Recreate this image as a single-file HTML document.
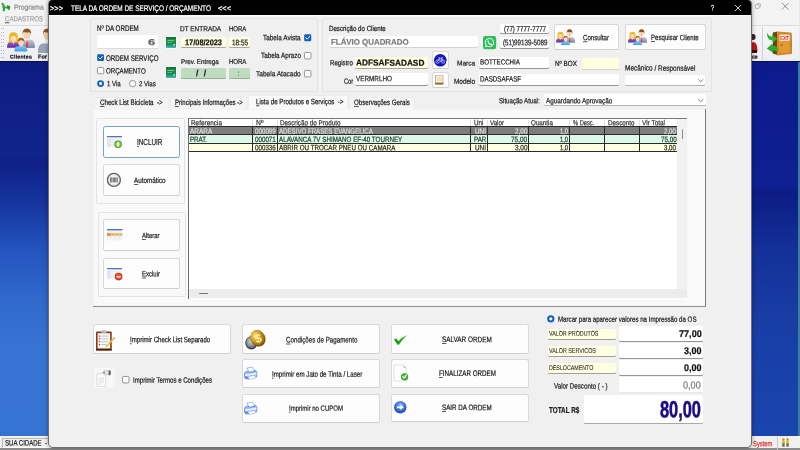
<!DOCTYPE html>
<html lang="pt-BR"><head><meta charset="utf-8"><title>Tela da Ordem de Serviço / Orçamento</title>
<style>
html,body{margin:0;padding:0}
body{width:800px;height:450px;overflow:hidden;position:relative;background:#f0f0f0;font-family:"Liberation Sans",sans-serif;color:#1a1a1a}
#root{position:absolute;left:0;top:0;width:800px;height:450px;overflow:hidden;transform:translateZ(0);will-change:transform}
.b{position:absolute;box-sizing:content-box}
.t{position:absolute;white-space:pre;line-height:1;transform-origin:0 0;display:block;-webkit-text-stroke:.22px}
.t u{text-decoration-thickness:.5px;text-underline-offset:.6px;text-decoration-color:rgba(20,20,20,.7)}
svg{position:absolute;overflow:visible}
</style></head>
<body>
<div id="root">
<div class="b" style="left:0;top:0;width:800px;height:450px;background:#f0f0f0"></div>
<div class="b" style="left:0.00px;top:0.00px;width:800.00px;height:25.00px;background:#f3f3f3;"></div>
<div class="b" style="left:0.00px;top:24.50px;width:800.00px;height:1.00px;background:#dcdcdc;"></div>
<div class="b" style="left:0.00px;top:25.50px;width:800.00px;height:36.00px;background:linear-gradient(to bottom,#f5f5f7,#eceef2);"></div>
<div class="b" style="left:0;top:61.5px;width:52px;height:375px;background:linear-gradient(to bottom,#0e1c80 0%,#10248e 25%,#0e2088 27%,#183aa4 40%,#2454be 50%,#3068cc 63%,#3874d4 77%,#3674d4 100%)"></div>
<div class="b" style="left:748px;top:61.5px;width:52px;height:375px;background:linear-gradient(to bottom,#0c1a8c 0%,#0e2092 33%,#0c1c86 35%,#143098 50%,#183ea6 70%,#1a44ae 100%)"></div>
<div class="b" style="left:798.30px;top:61.00px;width:1.70px;height:375.00px;background:#3c7c9c;"></div>
<div class="b" style="left:0.00px;top:61.00px;width:800.00px;height:1.00px;background:#081050;"></div>
<div class="b" style="left:0.00px;top:436.00px;width:800.00px;height:14.00px;background:#f0f0f0;"></div>
<div class="b" style="left:2.00px;top:437.60px;width:45.00px;height:8.80px;border:1px solid #b8b8b8;border-right-color:#fff;border-bottom-color:#fff;"></div>
<div class="b" style="left:0.00px;top:448.40px;width:800.00px;height:1.60px;background:#8c8c8c;"></div>
<span class="t" style="left:4.60px;top:439px;font-size:7.8px;transform:translateY(0.60px) rotate(.05deg) scaleX(0.7752);color:#222;">SUA CIDADE  -</span>
<span class="t" style="left:752.50px;top:440px;font-size:7.7px;transform:translateY(0.20px) rotate(.05deg) scaleX(0.7596);color:#e03030;">System</span>
<div class="b" style="left:777.00px;top:437.00px;width:1.00px;height:13.00px;background:#c8c8c8;"></div>
<svg style="left:781.00px;top:438.00px" width="9" height="9.6" viewBox="0 0 9 9.6"><rect x="0" y="0" width="9" height="9.6" fill="#fafafa"/><path d="M.8 9 V4 Q.8 2.4 2.4 2.4 Q4 2.4 4 4 V9 Z" fill="#e8b820"/><circle cx="2.4" cy="1.6" r="1.3" fill="#d09010"/>
<path d="M5 9 V4 Q5 2.4 6.6 2.4 Q8.2 2.4 8.2 4 V9 Z" fill="#e8c030"/><circle cx="6.6" cy="1.6" r="1.3" fill="#d09010"/><rect x="1.4" y="5.4" width="2" height="3" fill="#3a6ad0"/><rect x="5.6" y="5.4" width="2" height="3" fill="#3a6ad0"/></svg>
<div class="b" style="left:798.50px;top:0.00px;width:1.50px;height:61.00px;background:#e8e8e8;"></div>
<svg style="left:1.20px;top:1.60px" width="10" height="10" viewBox="0 0 10 10"><path d="M0.4 1.6 Q1.4 0.2 2.8 1.2 Q3.4 2.6 4.2 4.2 Q5 4.8 4.6 6 Q3.8 6.8 4 8.4 Q3.4 9.6 2 9.2 Q1.2 8 2 6.6 Q1 5 1.2 3.4 Q0.2 2.6 0.4 1.6 Z" fill="#2aa83a"/>
<path d="M6 3.4 Q7 2.6 7.6 3.8 Q8.6 3.4 9.2 4.4 Q9.6 5.8 8.8 6.4 Q9.4 7.6 8.4 8 Q7 8 6.8 6.8 Q5.4 6.6 4.6 6 L4.4 4.8 Q5.6 5 6.2 4.6 Q5.8 4 6 3.4 Z" fill="#259a34"/>
<path d="M1 1.8 Q1.8 1 2.4 1.8 L3.4 4.2 L2.4 4.6 Z" fill="#5cd060"/></svg>
<span class="t" style="left:14.00px;top:4px;font-size:7.1px;transform:translateY(0.50px) rotate(.05deg) scaleX(0.9559);color:#8a8a8a;">Programa</span>
<span class="t" style="left:5.00px;top:15px;font-size:7.3px;transform:translateY(0.20px) rotate(.05deg) scaleX(0.8364);color:#a0a4a8;"><u>C</u>ADASTROS</span>
<svg style="left:754.80px;top:3.20px" width="6.2" height="6.2" viewBox="0 0 7.5 7.5"><rect x="0.5" y="2" width="4.6" height="4.6" rx="1" fill="none" stroke="#8a8a8a" stroke-width=".7"/><path d="M2 2 V1.4 Q2 .5 3 .5 H5.6 Q6.6 .5 6.6 1.5 V4 Q6.6 5 5.8 5" fill="none" stroke="#8a8a8a" stroke-width=".7"/></svg>
<svg style="left:781.50px;top:2.50px" width="6.5" height="6.5" viewBox="0 0 6.5 6.5"><path d="M0 0 L6.5 6.5 M6.5 0 L0 6.5" stroke="#777" stroke-width="0.8" fill="none"/></svg>
<div class="b" style="left:1.00px;top:28.00px;width:1.00px;height:1.00px;background:#b8b8b8;"></div>
<div class="b" style="left:3.40px;top:28.00px;width:1.00px;height:1.00px;background:#b8b8b8;"></div>
<div class="b" style="left:1.00px;top:31.60px;width:1.00px;height:1.00px;background:#b8b8b8;"></div>
<div class="b" style="left:3.40px;top:31.60px;width:1.00px;height:1.00px;background:#b8b8b8;"></div>
<div class="b" style="left:1.00px;top:35.20px;width:1.00px;height:1.00px;background:#b8b8b8;"></div>
<div class="b" style="left:3.40px;top:35.20px;width:1.00px;height:1.00px;background:#b8b8b8;"></div>
<div class="b" style="left:1.00px;top:38.80px;width:1.00px;height:1.00px;background:#b8b8b8;"></div>
<div class="b" style="left:3.40px;top:38.80px;width:1.00px;height:1.00px;background:#b8b8b8;"></div>
<div class="b" style="left:1.00px;top:42.40px;width:1.00px;height:1.00px;background:#b8b8b8;"></div>
<div class="b" style="left:3.40px;top:42.40px;width:1.00px;height:1.00px;background:#b8b8b8;"></div>
<div class="b" style="left:1.00px;top:46.00px;width:1.00px;height:1.00px;background:#b8b8b8;"></div>
<div class="b" style="left:3.40px;top:46.00px;width:1.00px;height:1.00px;background:#b8b8b8;"></div>
<div class="b" style="left:1.00px;top:49.60px;width:1.00px;height:1.00px;background:#b8b8b8;"></div>
<div class="b" style="left:3.40px;top:49.60px;width:1.00px;height:1.00px;background:#b8b8b8;"></div>
<div class="b" style="left:1.00px;top:53.20px;width:1.00px;height:1.00px;background:#b8b8b8;"></div>
<div class="b" style="left:3.40px;top:53.20px;width:1.00px;height:1.00px;background:#b8b8b8;"></div>
<div class="b" style="left:1.00px;top:56.80px;width:1.00px;height:1.00px;background:#b8b8b8;"></div>
<div class="b" style="left:3.40px;top:56.80px;width:1.00px;height:1.00px;background:#b8b8b8;"></div>
<svg style="left:7.00px;top:28.00px" width="28" height="24" viewBox="0 0 28 24"><defs><linearGradient id="gsuit" x1="0" y1="0" x2="0" y2="1"><stop offset="0" stop-color="#c4c8d6"/><stop offset="1" stop-color="#7c86a6"/></linearGradient>
<linearGradient id="gpur" x1="0" y1="0" x2="0" y2="1"><stop offset="0" stop-color="#a066d6"/><stop offset="1" stop-color="#5a28a0"/></linearGradient>
<linearGradient id="gcy" x1="0" y1="0" x2="0" y2="1"><stop offset="0" stop-color="#7ccaf6"/><stop offset="1" stop-color="#3a9ee0"/></linearGradient></defs>
<path d="M15.4 20 Q14.6 12 19.6 11.6 L23 11.6 Q28.4 12.4 27.8 20 Z" fill="url(#gsuit)"/>
<path d="M18.2 11.4 L20 17 L21.6 11.4 Z" fill="#fdfdfd"/><path d="M19.5 12.4 L20.6 12.4 L21.2 18.6 L20 19.8 L19 18.6 Z" fill="#e0304a"/>
<ellipse cx="19.7" cy="6.6" rx="3.5" ry="4.4" fill="#f6d2ac"/>
<path d="M15.6 7 Q14.8 .4 20 .4 Q24.6 .6 24 6.6 Q23.4 3.6 20.6 4.4 Q18 5 16.6 3.8 Q16 5.4 15.6 7 Z" fill="#8a5420"/>
<path d="M0 19.8 Q-.2 14 4 13.6 L9 13.6 Q13 14.2 12.8 19.8 Z" fill="url(#gpur)"/>
<path d="M2.2 12.4 Q.8 4 6.4 4 Q12 4 10.8 12 Q11.6 13.6 12.2 14.4 L8.6 14.6 L4 14.6 L.8 14.6 Q2 13.6 2.2 12.4 Z" fill="#f0c030"/>
<ellipse cx="6.5" cy="10" rx="2.7" ry="3.5" fill="#f8dcb8"/><path d="M5.2 13 L6.5 16.4 L7.8 13 Z" fill="#f8dcb8"/>
<path d="M3.6 9.4 Q4 5.6 6.6 5.6 Q9.4 5.8 9.4 9.6 Q8 7.2 6.4 7.4 Q4.6 7.4 3.6 9.4 Z" fill="#e4ac18"/>
<path d="M7.6 23.6 Q7 18.6 11 18.2 L17 18.2 Q20.6 18.8 20.2 23.6 Z" fill="url(#gcy)"/>
<ellipse cx="14" cy="14.2" rx="2.9" ry="3.3" fill="#f8d6b0"/>
<path d="M10.8 14.4 Q10.2 9.8 14 9.8 Q17.8 9.8 17.2 14.2 Q16.4 12 14.4 12.2 Q12 12 10.8 14.4 Z" fill="#9a6426"/></svg>
<span class="t" style="left:10.00px;top:54px;font-size:5.2px;letter-spacing:0.236px;transform:translateY(0.40px) rotate(.05deg);font-weight:bold;color:#111;">Clientes</span>
<svg style="left:38.00px;top:28.00px" width="18" height="25" viewBox="0 0 18 25"><path d="M0 25 Q-.4 16 5 15.6 L14 15.6 Q18 16 18 25 Z" fill="#9aa2b8"/><ellipse cx="9.6" cy="6.8" rx="4" ry="5" fill="#f0c89c"/>
<path d="M5 7 Q4.4 .6 9.8 .6 Q15 .8 14.4 7 Q13.6 3.6 10.4 4.4 Q7.6 5 6.2 3.8 Q5.4 5.4 5 7 Z" fill="#8a5420"/></svg>
<span class="t" style="left:38.40px;top:54px;font-size:5.5px;letter-spacing:0.056px;transform:translateY(0.40px) rotate(.05deg);font-weight:bold;color:#111;">For</span>
<div class="b" style="left:762.30px;top:27.00px;width:1.00px;height:33.00px;background:#d0d0d0;"></div>
<svg style="left:766.00px;top:29.00px" width="27" height="28" viewBox="0 0 27 28"><path d="M6.8 3.4 L11.4 2.6 L11.4 26 L6.8 24.6 Z" fill="#6e4410"/>
<path d="M11.2 2.4 L24.6 3.6 L25.4 25 L11.2 26.4 Z" fill="#d88a22"/>
<path d="M24.6 3.6 L25.6 4 L26 24.6 L25.4 25 Z" fill="#a8640e"/>
<path d="M12.4 4 L23.6 5 L24.2 23.8 L12.4 24.8 Z" fill="#e29a30" stroke="#c07a18" stroke-width=".4"/>
<rect x="13.6" y="5.7" width="10" height="6" rx=".4" fill="#fff4f0"/>
<text x="18.6" y="10.6" font-family="Liberation Sans,sans-serif" font-size="5.2" font-weight="bold" fill="#e01818" text-anchor="middle" textLength="8.6" lengthAdjust="spacingAndGlyphs">EXIT</text>
<circle cx="15.6" cy="16" r="1.3" fill="#a86a14"/><circle cx="15.4" cy="15.8" r=".6" fill="#f0c060"/>
<path d="M0.8 3.6 Q2.6 7.6 6 7.8 L5.8 5.6 L11.4 9.8 L6.8 13.2 L6.4 11.6 Q1 11.6 0.8 3.6 Z" fill="#35b235"/>
<path d="M0.8 19.4 L6.6 14.6 L6.8 16.8 Q11 16.4 12.2 21 L11.6 23.6 Q9.4 21 6.8 21.6 L7 23.8 Z" fill="#2faa2f"/></svg>
<svg style="left:746.50px;top:33.00px" width="11" height="21" viewBox="0 0 11 21"><ellipse cx="6" cy="4" rx="2.6" ry="3" fill="#402020"/><path d="M2 19 Q2 9 6.4 9 Q10.6 9 10.4 19 Z" fill="#c01818"/><path d="M4 17 H10 V20 H4 Z" fill="#301010"/></svg>
<span class="t" style="left:752.30px;top:54px;font-size:5.5px;transform:translateY(0.40px) rotate(.05deg) scaleX(0.9317);font-weight:bold;color:#111;">ce</span>
<div class="b" style="left:47.5px;top:-1px;width:704.8px;height:449px;background:#f0f0f0;border:1px solid #6e6e6e;border-radius:5px;box-shadow:0 0 4px 0 rgba(0,0,0,.38);overflow:hidden;box-sizing:border-box"><div style="height:15px;background:#000"></div></div>
<div class="b" style="left:48.50px;top:14.60px;width:702.80px;height:1.00px;background:#fbfbfb;"></div>
<span class="t" style="left:50.00px;top:5px;font-size:8.1px;transform:translateY(0.00px) rotate(.05deg) scaleX(0.9161);color:#fff;">&gt;&gt;&gt;</span>
<span class="t" style="left:70.50px;top:5px;font-size:8.1px;transform:translateY(0.00px) rotate(.05deg) scaleX(0.7928);color:#fff;">TELA DA ORDEM DE SERVIÇO / ORÇAMENTO</span>
<span class="t" style="left:217.50px;top:5px;font-size:8.1px;transform:translateY(0.00px) rotate(.05deg) scaleX(0.9161);color:#fff;">&lt;&lt;&lt;</span>
<span class="t" style="left:710.50px;top:4px;font-size:8.0px;transform:translateY(0.50px) rotate(.05deg) scaleX(0.6743);color:#fff;">?</span>
<svg style="left:735.00px;top:4.50px" width="6" height="6" viewBox="0 0 6 6"><path d="M0 0 L6 6 M6 0 L0 6" stroke="#fff" stroke-width="0.8" fill="none"/></svg>
<div class="b" style="left:89.50px;top:18.00px;width:228.00px;height:73.50px;background:#f0f0f0;border:1px solid #e3e3e3;border-radius:2px;box-sizing:border-box;"></div>
<div class="b" style="left:322.00px;top:18.00px;width:390.30px;height:73.50px;background:#f0f0f0;border:1px solid #e3e3e3;border-radius:2px;box-sizing:border-box;"></div>
<span class="t" style="left:97.00px;top:24px;font-size:8.1px;transform:translateY(0.90px) rotate(.05deg) scaleX(0.7703);">Nº DA ORDEM</span>
<div class="b" style="left:97.00px;top:35.40px;width:60.50px;height:13.90px;background:#fff;border-radius:1.5px;box-shadow:inset 0 -1px 0 #dadada;"></div>
<span class="t" style="left:148.00px;top:38px;font-size:8.6px;transform:translateY(0.00px) rotate(.05deg) scaleX(1.5053);font-weight:bold;color:#666;">6</span>
<svg style="left:97.00px;top:54.00px" width="7.2" height="7.2" viewBox="0 0 10 10"><rect x=".2" y=".2" width="9.6" height="9.6" rx="1.8" fill="#1560bd"/><path d="M2.4 5.2 L4.3 7 L7.7 3.2" fill="none" stroke="#fff" stroke-width="1.2" stroke-linecap="round" stroke-linejoin="round"/></svg>
<span class="t" style="left:106.30px;top:54px;font-size:8.1px;transform:translateY(0.90px) rotate(.05deg) scaleX(0.7640);">ORDEM SERVIÇO</span>
<svg style="left:97.00px;top:67.30px" width="7.2" height="7.2" viewBox="0 0 10 10"><rect x=".6" y=".6" width="8.8" height="8.8" rx="1.6" fill="#fbfbfb" stroke="#727272" stroke-width="1"/></svg>
<span class="t" style="left:106.30px;top:67px;font-size:7.8px;transform:translateY(0.60px) rotate(.05deg) scaleX(0.7852);">ORÇAMENTO</span>
<svg style="left:97.00px;top:80.10px" width="7.2" height="7.2" viewBox="0 0 10 10"><circle cx="5" cy="5" r="4.8" fill="#1560bd"/><circle cx="5" cy="5" r="2.1" fill="#fff"/></svg>
<span class="t" style="left:106.60px;top:80px;font-size:7.7px;transform:translateY(0.30px) rotate(.05deg) scaleX(0.7868);">1 Via</span>
<svg style="left:129.00px;top:80.10px" width="7.2" height="7.2" viewBox="0 0 10 10"><circle cx="5" cy="5" r="4.4" fill="#fbfbfb" stroke="#727272" stroke-width="1"/></svg>
<span class="t" style="left:138.80px;top:80px;font-size:7.3px;transform:translateY(0.30px) rotate(.05deg) scaleX(0.8334);">2 Vias</span>
<div class="b" style="left:165.00px;top:36.00px;width:12.20px;height:13.00px;background:#f9f9f9;border-radius:1px;"></div>
<svg style="left:166.00px;top:37.00px" width="10" height="10.6" viewBox="0 0 10 10.6"><rect x="0" y="0" width="10" height="10.6" rx=".8" fill="#1e8a4a"/><rect x="0" y="8.2" width="10" height="2.4" fill="#2aa0a8"/>
<rect x="0" y="0" width="10" height="1.6" fill="#167038"/><rect x="1.5" y="3" width="6.4" height=".9" fill="#6fd08a"/><rect x="1.5" y="5" width="4.4" height=".9" fill="#58c078"/><rect x="7.4" y="7" width="1.6" height="1.6" fill="#bfe8c8"/></svg>
<div class="b" style="left:165.00px;top:65.60px;width:12.20px;height:12.80px;background:#f9f9f9;border-radius:1px;"></div>
<svg style="left:166.00px;top:66.60px" width="10" height="10.6" viewBox="0 0 10 10.6"><rect x="0" y="0" width="10" height="10.6" rx=".8" fill="#1e8a4a"/><rect x="0" y="8.2" width="10" height="2.4" fill="#2aa0a8"/>
<rect x="0" y="0" width="10" height="1.6" fill="#167038"/><rect x="1.5" y="3" width="6.4" height=".9" fill="#6fd08a"/><rect x="1.5" y="5" width="4.4" height=".9" fill="#58c078"/><rect x="7.4" y="7" width="1.6" height="1.6" fill="#bfe8c8"/></svg>
<span class="t" style="left:179.80px;top:25px;font-size:7.3px;transform:translateY(0.20px) rotate(.05deg) scaleX(0.8858);">DT ENTRADA</span>
<span class="t" style="left:229.00px;top:25px;font-size:7.3px;transform:translateY(0.20px) rotate(.05deg) scaleX(0.8202);">HORA</span>
<div class="b" style="left:180.60px;top:37.00px;width:45.40px;height:11.00px;background:#ffffe1;border-radius:1.5px;box-shadow:inset 0 -1px 0 #a8a8a0;"></div>
<span class="t" style="left:185.00px;top:38px;font-size:8.3px;transform:translateY(0.30px) rotate(.05deg) scaleX(0.8907);font-weight:bold;color:#111;">17/08/2023</span>
<div class="b" style="left:229.00px;top:37.00px;width:21.00px;height:11.00px;background:#ffffe1;border-radius:1.5px;box-shadow:inset 0 -1px 0 #a8a8a0;"></div>
<span class="t" style="left:232.00px;top:39px;font-size:8.1px;transform:translateY(0.20px) rotate(.05deg) scaleX(0.7893);">18:55</span>
<span class="t" style="left:181.00px;top:59px;font-size:6.8px;transform:translateY(0.00px) rotate(.05deg) scaleX(0.9203);">Prev. Entrega</span>
<span class="t" style="left:229.00px;top:58px;font-size:7.3px;transform:translateY(0.00px) rotate(.05deg) scaleX(0.8250);">HORA</span>
<div class="b" style="left:180.60px;top:68.00px;width:45.40px;height:11.00px;background:#c0dcc0;border-radius:1.5px;box-shadow:inset 0 -1px 0 #98b098;"></div>
<span class="t" style="left:196.00px;top:69px;font-size:8.7px;letter-spacing:0.181px;transform:translateY(0.00px) rotate(.05deg);font-weight:bold;color:#223;">/  /</span>
<div class="b" style="left:229.00px;top:68.00px;width:21.00px;height:11.00px;background:#c0dcc0;border-radius:1.5px;box-shadow:inset 0 -1px 0 #98b098;"></div>
<span class="t" style="left:238.30px;top:70px;font-size:8.0px;transform:translateY(0.00px) rotate(.05deg) scaleX(0.5399);color:#333;">:</span>
<span class="t" style="left:263.00px;top:34px;font-size:7.7px;transform:translateY(0.30px) rotate(.05deg) scaleX(0.8312);">Tabela Avista</span>
<svg style="left:304.20px;top:33.80px" width="7.4" height="7.4" viewBox="0 0 10 10"><rect x=".2" y=".2" width="9.6" height="9.6" rx="1.8" fill="#1560bd"/><path d="M2.4 5.2 L4.3 7 L7.7 3.2" fill="none" stroke="#fff" stroke-width="1.2" stroke-linecap="round" stroke-linejoin="round"/></svg>
<span class="t" style="left:260.60px;top:52px;font-size:7.7px;transform:translateY(0.00px) rotate(.05deg) scaleX(0.8196);">Tabela Aprazo</span>
<svg style="left:304.40px;top:51.60px" width="7.4" height="7.4" viewBox="0 0 10 10"><rect x=".6" y=".6" width="8.8" height="8.8" rx="1.6" fill="#fbfbfb" stroke="#727272" stroke-width="1"/></svg>
<span class="t" style="left:255.50px;top:70px;font-size:7.4px;transform:translateY(0.20px) rotate(.05deg) scaleX(0.8852);">Tabela Atacado</span>
<svg style="left:304.40px;top:69.60px" width="7.4" height="7.4" viewBox="0 0 10 10"><rect x=".6" y=".6" width="8.8" height="8.8" rx="1.6" fill="#fbfbfb" stroke="#727272" stroke-width="1"/></svg>
<span class="t" style="left:328.80px;top:25px;font-size:7.5px;transform:translateY(0.00px) rotate(.05deg) scaleX(0.8208);">Descrição do Cliente</span>
<div class="b" style="left:329.00px;top:36.00px;width:149.00px;height:11.80px;background:#fff;border-radius:1.5px;box-shadow:inset 0 -1px 0 #d4d4d4;"></div>
<span class="t" style="left:331.20px;top:37px;font-size:8.3px;transform:translateY(0.70px) rotate(.05deg) scaleX(0.9508);font-weight:bold;color:#7c7c7c;">FLÁVIO QUADRADO</span>
<svg style="left:482.50px;top:35.50px" width="13.2" height="13.2" viewBox="0 0 20 20"><rect x="0" y="0" width="20" height="20" rx="3.4" fill="#2cc058"/>
<path d="M10 3.6 A6.3 6.3 0 1 1 6.6 15.3 L3.8 16.2 L4.7 13.5 A6.3 6.3 0 0 1 10 3.6 Z" fill="none" stroke="#fff" stroke-width="1.5"/>
<path d="M7.6 6.8 Q8.3 6.4 8.7 7.3 L9.2 8.4 Q9.3 8.9 8.7 9.4 Q9.6 11.2 11.4 11.9 Q11.9 11.1 12.4 11.3 L13.6 11.9 Q14.1 12.2 13.7 13 Q12.9 14.2 11.4 13.8 Q8 12.8 7 9 Q6.7 7.5 7.6 6.8 Z" fill="#fff"/></svg>
<div class="b" style="left:500.00px;top:23.80px;width:49.00px;height:10.20px;background:#fff;border-radius:1.5px;box-shadow:inset 0 -1px 0 #969696;"></div>
<span class="t" style="left:504.00px;top:25px;font-size:7.8px;transform:translateY(0.60px) rotate(.05deg) scaleX(0.7874);">(77) 7777-7777</span>
<div class="b" style="left:500.00px;top:36.80px;width:49.00px;height:12.00px;background:#fff;border-radius:1.5px;box-shadow:inset 0 -1px 0 #969696;"></div>
<span class="t" style="left:502.60px;top:39px;font-size:8.1px;transform:translateY(0.20px) rotate(.05deg) scaleX(0.7702);">(51)99139-5089</span>
<div class="b" style="left:553.60px;top:23.80px;width:65.80px;height:26.50px;background:#fdfdfd;border:1px solid #d9d9d9;border-radius:2.5px;box-sizing:border-box;border-bottom-color:#cfcfcf;"></div>
<svg style="left:556.00px;top:29.20px" width="19.2" height="16.4" viewBox="0 0 28 24"><defs><linearGradient id="gsuit" x1="0" y1="0" x2="0" y2="1"><stop offset="0" stop-color="#c4c8d6"/><stop offset="1" stop-color="#7c86a6"/></linearGradient>
<linearGradient id="gpur" x1="0" y1="0" x2="0" y2="1"><stop offset="0" stop-color="#a066d6"/><stop offset="1" stop-color="#5a28a0"/></linearGradient>
<linearGradient id="gcy" x1="0" y1="0" x2="0" y2="1"><stop offset="0" stop-color="#7ccaf6"/><stop offset="1" stop-color="#3a9ee0"/></linearGradient></defs>
<path d="M15.4 20 Q14.6 12 19.6 11.6 L23 11.6 Q28.4 12.4 27.8 20 Z" fill="url(#gsuit)"/>
<path d="M18.2 11.4 L20 17 L21.6 11.4 Z" fill="#fdfdfd"/><path d="M19.5 12.4 L20.6 12.4 L21.2 18.6 L20 19.8 L19 18.6 Z" fill="#e0304a"/>
<ellipse cx="19.7" cy="6.6" rx="3.5" ry="4.4" fill="#f6d2ac"/>
<path d="M15.6 7 Q14.8 .4 20 .4 Q24.6 .6 24 6.6 Q23.4 3.6 20.6 4.4 Q18 5 16.6 3.8 Q16 5.4 15.6 7 Z" fill="#8a5420"/>
<path d="M0 19.8 Q-.2 14 4 13.6 L9 13.6 Q13 14.2 12.8 19.8 Z" fill="url(#gpur)"/>
<path d="M2.2 12.4 Q.8 4 6.4 4 Q12 4 10.8 12 Q11.6 13.6 12.2 14.4 L8.6 14.6 L4 14.6 L.8 14.6 Q2 13.6 2.2 12.4 Z" fill="#f0c030"/>
<ellipse cx="6.5" cy="10" rx="2.7" ry="3.5" fill="#f8dcb8"/><path d="M5.2 13 L6.5 16.4 L7.8 13 Z" fill="#f8dcb8"/>
<path d="M3.6 9.4 Q4 5.6 6.6 5.6 Q9.4 5.8 9.4 9.6 Q8 7.2 6.4 7.4 Q4.6 7.4 3.6 9.4 Z" fill="#e4ac18"/>
<path d="M7.6 23.6 Q7 18.6 11 18.2 L17 18.2 Q20.6 18.8 20.2 23.6 Z" fill="url(#gcy)"/>
<ellipse cx="14" cy="14.2" rx="2.9" ry="3.3" fill="#f8d6b0"/>
<path d="M10.8 14.4 Q10.2 9.8 14 9.8 Q17.8 9.8 17.2 14.2 Q16.4 12 14.4 12.2 Q12 12 10.8 14.4 Z" fill="#9a6426"/></svg>
<span class="t" style="left:583.00px;top:34px;font-size:7.8px;transform:translateY(0.30px) rotate(.05deg) scaleX(0.7788);"><u>C</u>onsultar</span>
<div class="b" style="left:625.30px;top:23.80px;width:80.30px;height:26.50px;background:#fdfdfd;border:1px solid #d9d9d9;border-radius:2.5px;box-sizing:border-box;border-bottom-color:#cfcfcf;"></div>
<svg style="left:628.00px;top:29.20px" width="19.2" height="16.4" viewBox="0 0 28 24"><defs><linearGradient id="gsuit" x1="0" y1="0" x2="0" y2="1"><stop offset="0" stop-color="#c4c8d6"/><stop offset="1" stop-color="#7c86a6"/></linearGradient>
<linearGradient id="gpur" x1="0" y1="0" x2="0" y2="1"><stop offset="0" stop-color="#a066d6"/><stop offset="1" stop-color="#5a28a0"/></linearGradient>
<linearGradient id="gcy" x1="0" y1="0" x2="0" y2="1"><stop offset="0" stop-color="#7ccaf6"/><stop offset="1" stop-color="#3a9ee0"/></linearGradient></defs>
<path d="M15.4 20 Q14.6 12 19.6 11.6 L23 11.6 Q28.4 12.4 27.8 20 Z" fill="url(#gsuit)"/>
<path d="M18.2 11.4 L20 17 L21.6 11.4 Z" fill="#fdfdfd"/><path d="M19.5 12.4 L20.6 12.4 L21.2 18.6 L20 19.8 L19 18.6 Z" fill="#e0304a"/>
<ellipse cx="19.7" cy="6.6" rx="3.5" ry="4.4" fill="#f6d2ac"/>
<path d="M15.6 7 Q14.8 .4 20 .4 Q24.6 .6 24 6.6 Q23.4 3.6 20.6 4.4 Q18 5 16.6 3.8 Q16 5.4 15.6 7 Z" fill="#8a5420"/>
<path d="M0 19.8 Q-.2 14 4 13.6 L9 13.6 Q13 14.2 12.8 19.8 Z" fill="url(#gpur)"/>
<path d="M2.2 12.4 Q.8 4 6.4 4 Q12 4 10.8 12 Q11.6 13.6 12.2 14.4 L8.6 14.6 L4 14.6 L.8 14.6 Q2 13.6 2.2 12.4 Z" fill="#f0c030"/>
<ellipse cx="6.5" cy="10" rx="2.7" ry="3.5" fill="#f8dcb8"/><path d="M5.2 13 L6.5 16.4 L7.8 13 Z" fill="#f8dcb8"/>
<path d="M3.6 9.4 Q4 5.6 6.6 5.6 Q9.4 5.8 9.4 9.6 Q8 7.2 6.4 7.4 Q4.6 7.4 3.6 9.4 Z" fill="#e4ac18"/>
<path d="M7.6 23.6 Q7 18.6 11 18.2 L17 18.2 Q20.6 18.8 20.2 23.6 Z" fill="url(#gcy)"/>
<ellipse cx="14" cy="14.2" rx="2.9" ry="3.3" fill="#f8d6b0"/>
<path d="M10.8 14.4 Q10.2 9.8 14 9.8 Q17.8 9.8 17.2 14.2 Q16.4 12 14.4 12.2 Q12 12 10.8 14.4 Z" fill="#9a6426"/></svg>
<span class="t" style="left:651.00px;top:34px;font-size:7.7px;transform:translateY(0.10px) rotate(.05deg) scaleX(0.7920);"><u>P</u>esquisar Cliente</span>
<span class="t" style="left:330.00px;top:59px;font-size:7.3px;transform:translateY(0.30px) rotate(.05deg) scaleX(0.8387);">Registro</span>
<div class="b" style="left:354.50px;top:57.00px;width:73.30px;height:11.80px;background:#ffffe1;border-radius:1.5px;box-shadow:inset 0 -1px 0 #a8a8a0;"></div>
<span class="t" style="left:356.00px;top:58px;font-size:8.6px;transform:translateY(0.60px) rotate(.05deg) scaleX(0.9608);font-weight:bold;color:#111;">ADFSAFSADASD</span>
<span class="t" style="left:343.50px;top:77px;font-size:7.6px;transform:translateY(0.80px) rotate(.05deg) scaleX(0.7349);">Cor</span>
<div class="b" style="left:354.50px;top:73.00px;width:73.30px;height:13.30px;background:#fff;border-radius:1.5px;box-shadow:inset 0 -1px 0 #969696;"></div>
<span class="t" style="left:356.00px;top:75px;font-size:7.7px;transform:translateY(0.30px) rotate(.05deg) scaleX(0.8249);">VERMRLHO</span>
<div class="b" style="left:431.50px;top:51.00px;width:17.10px;height:18.00px;background:#fdfdfd;border:1px solid #d9d9d9;border-radius:2.5px;box-sizing:border-box;border-bottom-color:#cfcfcf;"></div>
<svg style="left:433.50px;top:53.60px" width="12.6" height="12.6" viewBox="0 0 20 20"><circle cx="10" cy="10" r="10" fill="#1616b8"/>
<circle cx="5.6" cy="12" r="2.7" fill="none" stroke="#dfe4ff" stroke-width="1"/><circle cx="14.4" cy="12" r="2.7" fill="none" stroke="#dfe4ff" stroke-width="1"/>
<path d="M5.6 12 L8.4 7.2 H12.6 L14.4 12 M8.4 7.2 L10.4 12 L12.6 7.2 M7.4 6 H9.2 M12 5.6 L13.4 5.6" fill="none" stroke="#dfe4ff" stroke-width="1" stroke-linecap="round" stroke-linejoin="round"/></svg>
<div class="b" style="left:431.50px;top:71.50px;width:17.10px;height:16.70px;background:#fdfdfd;border:1px solid #d9d9d9;border-radius:2.5px;box-sizing:border-box;border-bottom-color:#cfcfcf;"></div>
<svg style="left:435.20px;top:75.40px" width="8.4" height="9.4" viewBox="0 0 8.4 9.4"><rect x="0" y="0" width="8.4" height="9.4" rx=".8" fill="#c4a878"/><rect x=".9" y=".6" width="6.6" height="7" fill="#f8f2e2"/><rect x="1.8" y="1.6" width="4.8" height="4.4" fill="#ece0c4"/>
<rect x="0" y="7.8" width="8.4" height="1.6" rx=".5" fill="#8e6c40"/></svg>
<span class="t" style="left:457.00px;top:59px;font-size:7.0px;transform:translateY(0.60px) rotate(.05deg) scaleX(0.9255);">Marca</span>
<div class="b" style="left:478.50px;top:57.00px;width:70.50px;height:11.80px;background:#fff;border-radius:1.5px;box-shadow:inset 0 -1px 0 #969696;"></div>
<span class="t" style="left:480.00px;top:58px;font-size:7.4px;transform:translateY(0.50px) rotate(.05deg) scaleX(0.8387);">BOTTECCHIA</span>
<span class="t" style="left:454.00px;top:77px;font-size:7.3px;transform:translateY(0.80px) rotate(.05deg) scaleX(0.8771);">Modelo</span>
<div class="b" style="left:478.50px;top:73.80px;width:140.70px;height:12.50px;background:#fff;border-radius:1.5px;box-shadow:inset 0 -1px 0 #969696;"></div>
<span class="t" style="left:480.00px;top:75px;font-size:7.6px;transform:translateY(0.50px) rotate(.05deg) scaleX(0.8197);">DASDSAFASF</span>
<span class="t" style="left:555.00px;top:60px;font-size:7.4px;transform:translateY(0.10px) rotate(.05deg) scaleX(0.8550);">Nº BOX</span>
<div class="b" style="left:581.60px;top:57.80px;width:37.70px;height:12.20px;background:#ffffe1;border-radius:1.5px;box-shadow:inset 0 -1px 0 #d4d4c4;"></div>
<span class="t" style="left:624.50px;top:64px;font-size:7.7px;transform:translateY(0.60px) rotate(.05deg) scaleX(0.8404);">Mecânico / Responsável</span>
<div class="b" style="left:624.50px;top:75.00px;width:80.80px;height:11.30px;background:#fff;border-radius:1.5px;box-shadow:inset 0 -1px 0 #b4b4b4;"></div>
<svg style="left:698.00px;top:79.20px" width="5.6" height="3.2" viewBox="0 0 5.6 3.2"><path d="M.5 .5 L2.8 2.7 L5.1 .5" fill="none" stroke="#555" stroke-width=".7" stroke-linecap="round" stroke-linejoin="round"/></svg>
<div class="b" style="left:93.50px;top:96.50px;width:75.00px;height:12.50px;background:#f4f4f4;border:1px solid #ececec;box-sizing:border-box;border-bottom:none;"></div>
<div class="b" style="left:170.00px;top:96.50px;width:77.00px;height:12.50px;background:#f4f4f4;border:1px solid #ececec;box-sizing:border-box;border-bottom:none;"></div>
<div class="b" style="left:349.00px;top:96.50px;width:65.50px;height:12.50px;background:#f4f4f4;border:1px solid #ececec;box-sizing:border-box;border-bottom:none;"></div>
<div class="b" style="left:93.00px;top:108.50px;width:613.30px;height:197.10px;background:#f9f9f9;border:1px solid #f4f4f4;box-sizing:border-box;"></div>
<div class="b" style="left:705.20px;top:108.70px;width:1.10px;height:198.80px;background:#7c7c7c;"></div>
<div class="b" style="left:248.00px;top:95.30px;width:99.50px;height:14.20px;background:#f9f9f9;border:1px solid #ececec;box-sizing:border-box;border-bottom:none;"></div>
<div class="b" style="left:93.00px;top:306.00px;width:613.30px;height:1.40px;background:#8e8e8e;"></div>
<span class="t" style="left:99.80px;top:99px;font-size:7.9px;transform:translateY(0.00px) rotate(.05deg) scaleX(0.7825);"><u>C</u>heck List Bicicleta  -&gt;</span>
<span class="t" style="left:175.30px;top:99px;font-size:7.9px;transform:translateY(0.00px) rotate(.05deg) scaleX(0.7577);"><u>P</u>rincipais Informações -&gt;</span>
<span class="t" style="left:255.50px;top:98px;font-size:7.8px;transform:translateY(0.30px) rotate(.05deg) scaleX(0.7899);"><u>L</u>ista de Produtos e Serviços  -&gt;</span>
<span class="t" style="left:353.50px;top:99px;font-size:7.9px;transform:translateY(0.00px) rotate(.05deg) scaleX(0.7763);"><u>O</u>bservações Gerais</span>
<span class="t" style="left:498.80px;top:97px;font-size:7.4px;transform:translateY(0.20px) rotate(.05deg) scaleX(0.8244);">Situação Atual:</span>
<div class="b" style="left:543.50px;top:94.00px;width:162.80px;height:12.30px;background:#fff;border-radius:1.5px;box-shadow:inset 0 -1px 0 #b4b4b4;"></div>
<span class="t" style="left:545.70px;top:97px;font-size:7.4px;transform:translateY(0.20px) rotate(.05deg) scaleX(0.8571);">Aguardando Aprovação</span>
<svg style="left:698.30px;top:99.20px" width="5.6" height="3.2" viewBox="0 0 5.6 3.2"><path d="M.5 .5 L2.8 2.7 L5.1 .5" fill="none" stroke="#555" stroke-width=".7" stroke-linecap="round" stroke-linejoin="round"/></svg>
<div class="b" style="left:96.30px;top:118.00px;width:88.70px;height:86.40px;background:#f9f9f9;border:1px solid #e3e3e3;border-radius:1.5px;box-sizing:border-box;"></div>
<div class="b" style="left:98.00px;top:211.50px;width:87.50px;height:85.80px;background:#f9f9f9;border:1px solid #e3e3e3;border-radius:1.5px;box-sizing:border-box;"></div>
<div class="b" style="left:102.50px;top:126.00px;width:77.50px;height:32.00px;background:#fdfdfd;border:1.5px solid #7a9fcc;border-radius:2.5px;box-sizing:border-box;"></div>
<svg style="left:107.00px;top:135.40px" width="16" height="14" viewBox="0 0 16 14"><rect x="0" y="1" width="15" height="11" fill="#f3f3f7"/><rect x="0" y="1" width="15" height="1.3" fill="#5070cc"/>
<path d="M0 4.8 H15 M0 7.2 H15 M0 9.6 H15 M3.4 2.3 V12" stroke="#e0e0e8" stroke-width=".5" fill="none"/><rect x="0" y="2.3" width="3.4" height="9.7" fill="#e4e6ee"/><circle cx="11.1" cy="9.2" r="3.7" fill="#3c9416"/><circle cx="11.1" cy="9.2" r="2.9" fill="#74d030"/><path d="M11.1 6.6 L13.2 9.4 H11.9 V11.8 H10.3 V9.4 H9 Z" fill="#fffbe0"/></svg>
<span class="t" style="left:137.00px;top:138px;font-size:8.7px;transform:translateY(0.00px) rotate(.05deg) scaleX(0.7269);"><u>I</u>NCLUIR</span>
<div class="b" style="left:102.50px;top:164.00px;width:77.50px;height:32.00px;background:#fdfdfd;border:1px solid #d9d9d9;border-radius:2.5px;box-sizing:border-box;border-bottom-color:#cfcfcf;"></div>
<svg style="left:107.10px;top:173.30px" width="13.8" height="13.8" viewBox="0 0 20 20"><circle cx="10" cy="10" r="9.4" fill="#fafafa" stroke="#5c5e62" stroke-width="1.9"/><circle cx="10" cy="10" r="7.4" fill="#f4f4f6" stroke="#c0c2c6" stroke-width=".6"/>
<path d="M5.2 6.4 V13.6 M7 6.4 V13.6 M9.1 6.4 V13.6 M11 6.4 V13.6 M12.8 6.4 V13.6 M14.8 6.4 V13.6" stroke="#45484c" stroke-width="1.15"/></svg>
<span class="t" style="left:134.00px;top:177px;font-size:7.8px;transform:translateY(0.00px) rotate(.05deg) scaleX(0.8098);"><u>A</u>utomático</span>
<div class="b" style="left:102.50px;top:219.40px;width:77.50px;height:31.20px;background:#fdfdfd;border:1px solid #d9d9d9;border-radius:2.5px;box-sizing:border-box;border-bottom-color:#cfcfcf;"></div>
<svg style="left:107.30px;top:229.20px" width="15.4" height="11.2" viewBox="0 0 15.4 11.2"><rect x="0" y="0" width="15.4" height="11.2" fill="#f6f6f9"/><rect x="0" y="0" width="15.4" height="1.4" fill="#5070cc"/>
<rect x="0" y="4.3" width="15.4" height="2.4" fill="#dcb650"/><rect x="0" y="4.3" width="4" height="2.4" fill="#c89a30"/><path d="M0 3.2 H15.4 M0 8.4 H15.4 M0 10.8 H15.4 M4 1.4 V11.2 M8.4 1.4 V11.2 M12.4 1.4 V11.2" stroke="#e2e2ea" stroke-width=".5" fill="none"/></svg>
<span class="t" style="left:142.00px;top:232px;font-size:7.4px;transform:translateY(0.00px) rotate(.05deg) scaleX(0.7983);"><u>A</u>lterar</span>
<div class="b" style="left:102.50px;top:257.50px;width:77.50px;height:31.90px;background:#fdfdfd;border:1px solid #d9d9d9;border-radius:2.5px;box-sizing:border-box;border-bottom-color:#cfcfcf;"></div>
<svg style="left:107.00px;top:267.00px" width="16" height="14" viewBox="0 0 16 14"><rect x="0" y="1" width="15" height="11" fill="#f3f3f7"/><rect x="0" y="1" width="15" height="1.3" fill="#5070cc"/>
<path d="M0 4.8 H15 M0 7.2 H15 M0 9.6 H15 M3.4 2.3 V12" stroke="#e0e0e8" stroke-width=".5" fill="none"/><rect x="0" y="2.3" width="3.4" height="9.7" fill="#e4e6ee"/><circle cx="11.6" cy="9.6" r="3.8" fill="#c02c14"/><circle cx="11.6" cy="9.3" r="2.9" fill="#ee5434"/><rect x="9.5" y="8.9" width="4.2" height="1.5" rx=".4" fill="#ffe4dc"/></svg>
<span class="t" style="left:142.00px;top:270px;font-size:7.8px;transform:translateY(0.40px) rotate(.05deg) scaleX(0.7691);"><u>E</u>xcluir</span>
<div class="b" style="left:187.50px;top:118.00px;width:499.00px;height:180.50px;background:#fff;"></div>
<div class="b" style="left:187.50px;top:118.00px;width:499.00px;height:1.00px;background:#777;"></div>
<div class="b" style="left:187.50px;top:118.00px;width:1.50px;height:180.50px;background:#6e6e6e;"></div>
<div class="b" style="left:677.00px;top:119.00px;width:9.50px;height:170.00px;background:#f1f1f1;"></div>
<div class="b" style="left:681.60px;top:129.00px;width:1.40px;height:9.50px;background:#8a8a8a;border-radius:1px;"></div>
<div class="b" style="left:189.00px;top:288.80px;width:497.50px;height:9.70px;background:#ececec;"></div>
<div class="b" style="left:198.80px;top:293.00px;width:9.70px;height:1.20px;background:#777;border-radius:1px;"></div>
<div class="b" style="left:189.00px;top:126.60px;width:488.00px;height:8.30px;background:#7d7d7d;"></div>
<div class="b" style="left:189.00px;top:134.90px;width:488.00px;height:8.30px;background:#ddf9e9;"></div>
<div class="b" style="left:189.00px;top:143.20px;width:488.00px;height:8.30px;background:#fffde2;"></div>
<div class="b" style="left:252.20px;top:119.50px;width:0.60px;height:6.80px;background:#e4e4e4;"></div>
<div class="b" style="left:277.00px;top:119.50px;width:0.60px;height:6.80px;background:#e4e4e4;"></div>
<div class="b" style="left:470.30px;top:119.50px;width:0.60px;height:6.80px;background:#e4e4e4;"></div>
<div class="b" style="left:487.20px;top:119.50px;width:0.60px;height:6.80px;background:#e4e4e4;"></div>
<div class="b" style="left:528.20px;top:119.50px;width:0.60px;height:6.80px;background:#e4e4e4;"></div>
<div class="b" style="left:569.10px;top:119.50px;width:0.60px;height:6.80px;background:#e4e4e4;"></div>
<div class="b" style="left:604.10px;top:119.50px;width:0.60px;height:6.80px;background:#e4e4e4;"></div>
<div class="b" style="left:639.10px;top:119.50px;width:0.60px;height:6.80px;background:#e4e4e4;"></div>
<div class="b" style="left:189.00px;top:126.05px;width:488.00px;height:1.10px;background:#2a2a2a;"></div>
<div class="b" style="left:189.00px;top:134.35px;width:488.00px;height:1.10px;background:#2a2a2a;"></div>
<div class="b" style="left:189.00px;top:142.65px;width:488.00px;height:1.10px;background:#2a2a2a;"></div>
<div class="b" style="left:189.00px;top:150.95px;width:488.00px;height:1.10px;background:#2a2a2a;"></div>
<div class="b" style="left:251.95px;top:126.60px;width:1.10px;height:24.90px;background:#2a2a2a;"></div>
<div class="b" style="left:276.75px;top:126.60px;width:1.10px;height:24.90px;background:#2a2a2a;"></div>
<div class="b" style="left:470.05px;top:126.60px;width:1.10px;height:24.90px;background:#2a2a2a;"></div>
<div class="b" style="left:486.95px;top:126.60px;width:1.10px;height:24.90px;background:#2a2a2a;"></div>
<div class="b" style="left:527.95px;top:126.60px;width:1.10px;height:24.90px;background:#2a2a2a;"></div>
<div class="b" style="left:568.85px;top:126.60px;width:1.10px;height:24.90px;background:#2a2a2a;"></div>
<div class="b" style="left:603.85px;top:126.60px;width:1.10px;height:24.90px;background:#2a2a2a;"></div>
<div class="b" style="left:638.85px;top:126.60px;width:1.10px;height:24.90px;background:#2a2a2a;"></div>
<span class="t" style="left:191.00px;top:119px;font-size:7.3px;transform:translateY(0.20px) rotate(.05deg) scaleX(0.8781);color:#333;">Referencia</span>
<span class="t" style="left:255.60px;top:119px;font-size:7.7px;transform:translateY(0.20px) rotate(.05deg) scaleX(0.8838);color:#333;">Nº</span>
<span class="t" style="left:280.00px;top:119px;font-size:7.3px;transform:translateY(0.20px) rotate(.05deg) scaleX(0.8632);color:#333;">Descrição do Produto</span>
<span class="t" style="left:473.50px;top:119px;font-size:7.7px;transform:translateY(0.20px) rotate(.05deg) scaleX(0.8222);color:#333;">Uni</span>
<span class="t" style="left:490.00px;top:119px;font-size:7.3px;transform:translateY(0.20px) rotate(.05deg) scaleX(0.8484);color:#333;">Valor</span>
<span class="t" style="left:531.00px;top:119px;font-size:7.3px;transform:translateY(0.20px) rotate(.05deg) scaleX(0.8604);color:#333;">Quantia</span>
<span class="t" style="left:572.50px;top:119px;font-size:7.3px;transform:translateY(0.20px) rotate(.05deg) scaleX(0.7837);color:#333;">% Desc.</span>
<span class="t" style="left:607.50px;top:119px;font-size:7.3px;transform:translateY(0.20px) rotate(.05deg) scaleX(0.8593);color:#333;">Desconto</span>
<span class="t" style="left:642.30px;top:119px;font-size:7.3px;transform:translateY(0.20px) rotate(.05deg) scaleX(0.8766);color:#333;">Vlr Total</span>
<span class="t" style="left:189.60px;top:127px;font-size:7.7px;transform:translateY(0.80px) rotate(.05deg) scaleX(0.8443);color:#dedede;">ARARA</span>
<span class="t" style="left:254.80px;top:127px;font-size:7.7px;transform:translateY(0.80px) rotate(.05deg) scaleX(0.8095);color:#dedede;">000099</span>
<span class="t" style="left:279.00px;top:127px;font-size:7.7px;transform:translateY(0.80px) rotate(.05deg) scaleX(0.7969);color:#dedede;">ADESIVO FRASES EVANGELICA</span>
<span class="t" style="left:475.00px;top:127px;font-size:7.7px;transform:translateY(0.80px) rotate(.05deg) scaleX(0.8295);color:#dedede;">UNI</span>
<span class="t" style="left:515.00px;top:127px;font-size:7.7px;transform:translateY(0.80px) rotate(.05deg) scaleX(0.8341);color:#dedede;">2,00</span>
<span class="t" style="left:560.00px;top:127px;font-size:7.7px;transform:translateY(0.80px) rotate(.05deg) scaleX(0.7474);color:#dedede;">1,0</span>
<span class="t" style="left:664.40px;top:127px;font-size:7.7px;transform:translateY(0.80px) rotate(.05deg) scaleX(0.7940);color:#dedede;">2,00</span>
<span class="t" style="left:190.00px;top:136px;font-size:7.7px;transform:translateY(0.00px) rotate(.05deg) scaleX(0.8000);color:#1c3a2c;">PRAT.</span>
<span class="t" style="left:254.80px;top:136px;font-size:7.7px;transform:translateY(0.00px) rotate(.05deg) scaleX(0.8095);color:#1c3a2c;">000071</span>
<span class="t" style="left:279.00px;top:136px;font-size:7.7px;transform:translateY(0.00px) rotate(.05deg) scaleX(0.8137);color:#1c3a2c;">ALAVANCA 7V SHIMANO EF-40 TOURNEY</span>
<span class="t" style="left:473.80px;top:136px;font-size:7.7px;transform:translateY(0.00px) rotate(.05deg) scaleX(0.7994);color:#1c3a2c;">PAR</span>
<span class="t" style="left:511.30px;top:136px;font-size:7.7px;transform:translateY(0.00px) rotate(.05deg) scaleX(0.8407);color:#1c3a2c;">75,00</span>
<span class="t" style="left:560.00px;top:136px;font-size:7.7px;transform:translateY(0.00px) rotate(.05deg) scaleX(0.7474);color:#1c3a2c;">1,0</span>
<span class="t" style="left:660.60px;top:136px;font-size:7.7px;transform:translateY(0.00px) rotate(.05deg) scaleX(0.8148);color:#1c3a2c;">75,00</span>
<span class="t" style="left:254.80px;top:144px;font-size:7.7px;transform:translateY(0.30px) rotate(.05deg) scaleX(0.8095);color:#2a2a1a;">000336</span>
<span class="t" style="left:279.00px;top:144px;font-size:7.7px;transform:translateY(0.30px) rotate(.05deg) scaleX(0.8095);color:#2a2a1a;">ABRIR OU TROCAR PNEU OU CAMARA</span>
<span class="t" style="left:475.00px;top:144px;font-size:7.7px;transform:translateY(0.30px) rotate(.05deg) scaleX(0.8295);color:#2a2a1a;">UNI</span>
<span class="t" style="left:515.00px;top:144px;font-size:7.7px;transform:translateY(0.30px) rotate(.05deg) scaleX(0.8341);color:#2a2a1a;">3,00</span>
<span class="t" style="left:560.00px;top:144px;font-size:7.7px;transform:translateY(0.30px) rotate(.05deg) scaleX(0.7474);color:#2a2a1a;">1,0</span>
<span class="t" style="left:664.40px;top:144px;font-size:7.7px;transform:translateY(0.30px) rotate(.05deg) scaleX(0.7940);color:#2a2a1a;">3,00</span>
<div class="b" style="left:93.00px;top:324.40px;width:138.30px;height:30.00px;background:#fdfdfd;border:1px solid #d9d9d9;border-radius:2.5px;box-sizing:border-box;border-bottom-color:#cfcfcf;"></div>
<svg style="left:96.20px;top:329.80px" width="19.2" height="21" viewBox="0 0 19 20"><rect x="0" y="1" width="15.6" height="19" rx="1.2" fill="#8a3818"/><rect x="1.6" y="2.8" width="12.4" height="15" fill="#fbfbf6"/>
<rect x="5" y="0" width="5.6" height="2.6" rx=".8" fill="#b0b4bc"/><rect x="0" y="18.4" width="15.6" height="1.6" rx=".6" fill="#5a200c"/>
<path d="M5.4 5.6 H12.4 M5.4 8.4 H12.4 M5.4 11.2 H12.4 M5.4 14 H10.4" stroke="#a8b0c8" stroke-width=".8"/>
<path d="M2.8 5.6 h1.4 M2.8 8.4 h1.4 M2.8 11.2 h1.4 M2.8 14 h1.4" stroke="#d03030" stroke-width="1.2"/>
<path d="M17.8 6.8 L18.8 7.8 L11.6 15.6 L9.8 16.4 L10.4 14.6 Z" fill="#f0c028"/><path d="M9.8 16.4 L10.1 15.4 L10.8 16 Z" fill="#444"/><path d="M17.8 6.8 L18.8 7.8 L18 8.6 L17 7.6Z" fill="#e88080"/></svg>
<span class="t" style="left:130.30px;top:336px;font-size:7.9px;transform:translateY(0.30px) rotate(.05deg) scaleX(0.7717);"><u>I</u>mprimir Check List Separado</span>
<div class="b" style="left:93.80px;top:368.00px;width:21.20px;height:20.00px;background:#f7f7f7;"></div>
<svg style="left:96.50px;top:369.50px" width="14" height="16.6" viewBox="0 0 14 16.6"><path d="M0 3.6 H6.6 L8.6 5.6 V16.4 H0 Z" fill="#fdfdfd" stroke="#c8c8c8" stroke-width=".6"/><path d="M1.6 8 H7 M1.6 10 H7 M1.6 12 H7 M1.6 14 H5.6" stroke="#d0d0d0" stroke-width=".7"/>
<rect x="6.2" y="0.4" width="7.4" height="4.4" rx="1" fill="#e2e2e2" stroke="#bdbdbd" stroke-width=".5"/><rect x="11.6" y=".6" width="2" height="4.6" rx=".8" fill="#5a5a5a"/><path d="M5.2 2.6 L8 1.4 V3.8 Z" fill="#8a8a8a"/></svg>
<svg style="left:122.00px;top:376.20px" width="7.4" height="7.4" viewBox="0 0 10 10"><rect x=".6" y=".6" width="8.8" height="8.8" rx="1.6" fill="#fbfbfb" stroke="#727272" stroke-width="1"/></svg>
<span class="t" style="left:133.00px;top:376px;font-size:7.8px;transform:translateY(0.70px) rotate(.05deg) scaleX(0.7799);">Imprimir Termos e Condições</span>
<div class="b" style="left:241.50px;top:324.40px;width:138.80px;height:29.80px;background:#fdfdfd;border:1px solid #d9d9d9;border-radius:2.5px;box-sizing:border-box;border-bottom-color:#cfcfcf;"></div>
<svg style="left:245.40px;top:329.40px" width="20.4" height="20.6" viewBox="0 0 20.4 20.6"><defs><radialGradient id="ggold" cx=".42" cy=".32" r=".75"><stop offset="0" stop-color="#ffe68a"/><stop offset=".45" stop-color="#d6a020"/><stop offset="1" stop-color="#7a5006"/></radialGradient>
<radialGradient id="gsil" cx=".45" cy=".4" r=".7"><stop offset="0" stop-color="#d0d4da"/><stop offset=".6" stop-color="#8a8e96"/><stop offset="1" stop-color="#3c4046"/></radialGradient></defs>
<ellipse cx="6.4" cy="13.8" rx="6.2" ry="6.6" fill="#3c4046"/><ellipse cx="6.6" cy="13.4" rx="5.4" ry="5.8" fill="url(#gsil)"/>
<g transform="rotate(-28 12.8 9)"><ellipse cx="12.8" cy="9.4" rx="7.2" ry="8.4" fill="#6a4404"/><ellipse cx="12.8" cy="8.8" rx="7" ry="8" fill="url(#ggold)"/></g>
<text x="13.2" y="13.4" font-family="Liberation Sans,sans-serif" font-size="12" font-weight="bold" fill="#fff0a8" text-anchor="middle" opacity=".95" transform="rotate(-18 13 9)">$</text></svg>
<span class="t" style="left:286.00px;top:336px;font-size:8.1px;transform:translateY(0.50px) rotate(.05deg) scaleX(0.7670);"><u>C</u>ondições de Pagamento</span>
<div class="b" style="left:241.50px;top:358.50px;width:138.80px;height:29.80px;background:#fdfdfd;border:1px solid #d9d9d9;border-radius:2.5px;box-sizing:border-box;border-bottom-color:#cfcfcf;"></div>
<svg style="left:244.40px;top:367.20px" width="13.4" height="12.8" viewBox="0 0 13.4 12.8"><path d="M3 1 L8.4 0.2 L10.8 4.4 L5 5.6 Z" fill="#fafcff" stroke="#6a92e6" stroke-width=".6"/>
<path d="M0.5 6.6 Q0.4 4.8 2.4 4.5 L4.6 4.2 L5.2 5.4 L10.6 4.4 L10.2 3.4 Q12.8 3.2 12.8 5.4 V8.8 Q12.8 10.2 11.2 10.5 L3.6 12 Q0.6 12.3 0.5 10 Z" fill="#9cc0fa" stroke="#3a68d8" stroke-width=".6"/>
<path d="M1 7.4 L12.4 5.6 V7.4 L1 9.2 Z" fill="#eef4ff"/><path d="M3.4 9.8 L10.4 8.6 L12.2 10.8 L5.6 12.4 Z" fill="#fff" stroke="#7a9ae6" stroke-width=".5"/>
<path d="M1 9.2 L3.4 9.8 L5.6 12.2 L3.6 12 Q.6 12.2 .6 10 Z" fill="#5a8af0"/></svg>
<span class="t" style="left:272.00px;top:370px;font-size:7.8px;transform:translateY(0.70px) rotate(.05deg) scaleX(0.7920);"><u>I</u>mprimir em Jato de Tinta / Laser</span>
<div class="b" style="left:241.50px;top:393.60px;width:138.80px;height:29.40px;background:#fdfdfd;border:1px solid #d9d9d9;border-radius:2.5px;box-sizing:border-box;border-bottom-color:#cfcfcf;"></div>
<svg style="left:244.40px;top:402.00px" width="13.4" height="12.8" viewBox="0 0 13.4 12.8"><path d="M3 1 L8.4 0.2 L10.8 4.4 L5 5.6 Z" fill="#fafcff" stroke="#6a92e6" stroke-width=".6"/>
<path d="M0.5 6.6 Q0.4 4.8 2.4 4.5 L4.6 4.2 L5.2 5.4 L10.6 4.4 L10.2 3.4 Q12.8 3.2 12.8 5.4 V8.8 Q12.8 10.2 11.2 10.5 L3.6 12 Q0.6 12.3 0.5 10 Z" fill="#9cc0fa" stroke="#3a68d8" stroke-width=".6"/>
<path d="M1 7.4 L12.4 5.6 V7.4 L1 9.2 Z" fill="#eef4ff"/><path d="M3.4 9.8 L10.4 8.6 L12.2 10.8 L5.6 12.4 Z" fill="#fff" stroke="#7a9ae6" stroke-width=".5"/>
<path d="M1 9.2 L3.4 9.8 L5.6 12.2 L3.6 12 Q.6 12.2 .6 10 Z" fill="#5a8af0"/></svg>
<span class="t" style="left:289.40px;top:404px;font-size:7.5px;transform:translateY(0.70px) rotate(.05deg) scaleX(0.7984);"><u>I</u>mprimir no CUPOM</span>
<div class="b" style="left:391.20px;top:324.40px;width:138.20px;height:29.80px;background:#fdfdfd;border:1px solid #d9d9d9;border-radius:2.5px;box-sizing:border-box;border-bottom-color:#cfcfcf;"></div>
<svg style="left:393.80px;top:334.70px" width="13.2" height="9.8" viewBox="0 0 13.2 9.8"><path d="M0 4.4 L2.2 3.4 L4.4 6.2 Q8 2 13.2 0 Q8.2 4 5 9.8 L3.6 9.8 Z" fill="#20b010"/><path d="M.6 4.5 L2 3.9 L4.4 7 L4.2 9 Z" fill="#158a08"/></svg>
<span class="t" style="left:442.30px;top:336px;font-size:8.0px;transform:translateY(0.10px) rotate(.05deg) scaleX(0.7967);"><u>S</u>ALVAR ORDEM</span>
<div class="b" style="left:391.20px;top:358.50px;width:138.20px;height:29.80px;background:#fdfdfd;border:1px solid #d9d9d9;border-radius:2.5px;box-sizing:border-box;border-bottom-color:#cfcfcf;"></div>
<svg style="left:393.80px;top:365.40px" width="14.4" height="16.4" viewBox="0 0 14.4 16.4"><path d="M0 0 H9.4 L12.4 3 V16 H0 Z" fill="#fefefe" stroke="#d0d0d0" stroke-width=".6"/><path d="M9.4 0 V3 H12.4 Z" fill="#c8c8c8"/>
<circle cx="10.6" cy="11.8" r="3.6" fill="#2a9c1c"/><circle cx="10.6" cy="11.6" r="2.8" fill="#4cc03a"/><path d="M8.8 11.7 L10.1 13 L12.5 10.2" fill="none" stroke="#fff" stroke-width="1.1" stroke-linecap="round" stroke-linejoin="round"/></svg>
<span class="t" style="left:439.40px;top:370px;font-size:8.1px;transform:translateY(0.00px) rotate(.05deg) scaleX(0.7709);"><u>F</u>INALIZAR ORDEM</span>
<div class="b" style="left:391.20px;top:393.60px;width:138.20px;height:28.80px;background:#fdfdfd;border:1px solid #d9d9d9;border-radius:2.5px;box-sizing:border-box;border-bottom-color:#cfcfcf;"></div>
<svg style="left:394.30px;top:401.10px" width="12.6" height="12.6" viewBox="0 0 20 20"><defs><radialGradient id="gblue" cx=".5" cy=".3" r=".8"><stop offset="0" stop-color="#8ab4ff"/><stop offset=".6" stop-color="#3a6ee0"/><stop offset="1" stop-color="#1a3cae"/></radialGradient></defs>
<circle cx="10" cy="10" r="9.8" fill="#2448b8"/><circle cx="10" cy="10" r="8.6" fill="url(#gblue)"/>
<path d="M4.6 8.6 H10 V5.6 L15.6 10 L10 14.4 V11.4 H4.6 Z" fill="#fff"/></svg>
<span class="t" style="left:442.30px;top:404px;font-size:7.8px;transform:translateY(0.10px) rotate(.05deg) scaleX(0.8019);"><u>S</u>AIR DA ORDEM</span>
<svg style="left:546.80px;top:315.00px" width="7.6" height="7.6" viewBox="0 0 10 10"><circle cx="5" cy="5" r="4.8" fill="#1560bd"/><circle cx="5" cy="5" r="2.1" fill="#fff"/></svg>
<span class="t" style="left:558.00px;top:315px;font-size:7.5px;transform:translateY(0.70px) rotate(.05deg) scaleX(0.8183);">Marcar para aparecer valores na Impressão da OS</span>
<div class="b" style="left:547.50px;top:329.00px;width:68.80px;height:10.80px;background:#ffffe1;border-radius:1.5px;box-shadow:inset 0 -1px 0 #a0a098;"></div>
<span class="t" style="left:549.40px;top:329px;font-size:7.0px;transform:translateY(0.80px) rotate(.05deg) scaleX(0.7635);color:#2a2a2a;-webkit-text-stroke:.08px;">VALOR PRODUTOS</span>
<div class="b" style="left:547.50px;top:346.00px;width:68.80px;height:11.00px;background:#ffffe1;border-radius:1.5px;box-shadow:inset 0 -1px 0 #a0a098;"></div>
<span class="t" style="left:549.40px;top:347px;font-size:7.0px;transform:translateY(0.00px) rotate(.05deg) scaleX(0.7662);color:#2a2a2a;-webkit-text-stroke:.08px;">VALOR SERVICOS</span>
<div class="b" style="left:547.50px;top:363.00px;width:68.80px;height:11.00px;background:#ffffe1;border-radius:1.5px;box-shadow:inset 0 -1px 0 #a0a098;"></div>
<span class="t" style="left:549.40px;top:364px;font-size:6.7px;transform:translateY(0.90px) rotate(.05deg) scaleX(0.7915);color:#2a2a2a;-webkit-text-stroke:.08px;">DESLOCAMENTO</span>
<div class="b" style="left:618.80px;top:326.00px;width:84.20px;height:15.80px;background:#fff;border-radius:1.5px;box-shadow:inset 0 -1px 0 #969696;"></div>
<div class="b" style="left:618.80px;top:343.20px;width:84.20px;height:15.80px;background:#fff;border-radius:1.5px;box-shadow:inset 0 -1px 0 #969696;"></div>
<div class="b" style="left:618.80px;top:359.80px;width:84.20px;height:16.40px;background:#fff;border-radius:1.5px;box-shadow:inset 0 -1px 0 #969696;"></div>
<div class="b" style="left:618.80px;top:376.80px;width:84.20px;height:16.60px;background:#fff;border-radius:1.5px;box-shadow:inset 0 -1px 0 #e8e8e8;"></div>
<span class="t" style="left:678.50px;top:329px;font-size:9.7px;transform:translateY(0.10px) rotate(.05deg) scaleX(0.9393);font-weight:bold;color:#111;">77,00</span>
<span class="t" style="left:683.80px;top:346px;font-size:9.7px;transform:translateY(0.10px) rotate(.05deg) scaleX(0.9269);font-weight:bold;color:#111;">3,00</span>
<span class="t" style="left:683.80px;top:363px;font-size:9.7px;transform:translateY(0.10px) rotate(.05deg) scaleX(0.9269);font-weight:bold;color:#111;">0,00</span>
<span class="t" style="left:682.80px;top:380px;font-size:10.2px;transform:translateY(0.50px) rotate(.05deg) scaleX(0.8966);color:#787878;">0,00</span>
<span class="t" style="left:554.40px;top:382px;font-size:7.7px;transform:translateY(0.60px) rotate(.05deg) scaleX(0.8098);">Valor Desconto ( - )</span>
<div class="b" style="left:584.20px;top:395.00px;width:118.60px;height:29.20px;background:#fff;border-radius:1.5px;box-shadow:inset 0 -1px 0 #a8a8a8;"></div>
<span class="t" style="left:548.50px;top:406px;font-size:8.6px;transform:translateY(0.10px) rotate(.05deg) scaleX(0.7373);font-weight:bold;color:#222;">TOTAL R$</span>
<span class="t" style="left:660.00px;top:398px;font-size:23.3px;transform:translateY(0.30px) rotate(.05deg) scaleX(0.7032);font-weight:bold;color:#1c0a86;-webkit-text-stroke:.6px #1c0a86;">80,00</span>
</div>
</body></html>
